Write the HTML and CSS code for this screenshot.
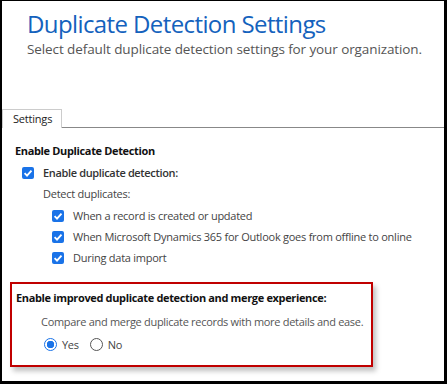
FILE: index.html
```html
<!DOCTYPE html>
<html lang="en">
  <head>
    <meta charset="UTF-8" />
    <title>Duplicate Detection Settings</title>
    <link rel="stylesheet" href="styles.css">
  </head>
  <body>
    <div class="frame">
      <div class="header">
        <h1 class="title">Duplicate Detection Settings</h1>
        <p class="subtitle">Select default duplicate detection settings for your organization.</p>
      </div>

      <div class="tabs">
        <div class="tab">Settings</div>
        <div class="tabLine"></div>
      </div>

      <div class="content">
        <h3 class="sectionTitle">Enable Duplicate Detection</h3>
        <div class="checkRow main">
          <span class="check"><svg viewBox="0 0 12 12" width="12" height="12"><path d="M2.6 6.2 L5 8.6 L9.5 3.6" fill="none" stroke="#fff" stroke-width="1.9" /></svg></span>
          <span class="mainLabel">Enable duplicate detection:</span>
        </div>
        <div class="detectLabel">Detect duplicates:</div>
        <div class="subChecks">
          <div class="checkRow">
            <span class="check"><svg viewBox="0 0 12 12" width="12" height="12"><path d="M2.6 6.2 L5 8.6 L9.5 3.6" fill="none" stroke="#fff" stroke-width="1.9" /></svg></span>
            <span>When a record is created or updated</span>
          </div>
          <div class="checkRow">
            <span class="check"><svg viewBox="0 0 12 12" width="12" height="12"><path d="M2.6 6.2 L5 8.6 L9.5 3.6" fill="none" stroke="#fff" stroke-width="1.9" /></svg></span>
            <span>When Microsoft Dynamics 365 for Outlook goes from offline to online</span>
          </div>
          <div class="checkRow">
            <span class="check"><svg viewBox="0 0 12 12" width="12" height="12"><path d="M2.6 6.2 L5 8.6 L9.5 3.6" fill="none" stroke="#fff" stroke-width="1.9" /></svg></span>
            <span>During data import</span>
          </div>
        </div>
      </div>

      <div class="highlight">
        <h3 class="highlightTitle">Enable improved duplicate detection and merge experience:</h3>
        <p class="highlightText">Compare and merge duplicate records with more details and ease.</p>
        <div class="radios">
          <label class="radio"><span class="dot checked"></span>Yes</label>
          <label class="radio"><span class="dot"></span>No</label>
        </div>
      </div>
    </div>
  </body>
</html>
```

FILE: styles.css
```css
body {
  margin: 0;
  font-family: "Segoe UI", "Open Sans", sans-serif;
  color: #444;
}
.frame {
  width: 447px;
  height: 384px;
  box-sizing: border-box;
  border-style: solid;
  border-color: #000;
  border-width: 1px 3px 3px 2px;
  background-color: #fff;
  overflow: hidden;
}

.header {
  padding: 7px 0 0 25px;
}
.title {
  margin: 0;
  font-size: 24px;
  font-weight: normal;
  line-height: 32px;
  color: #1462bd;
  letter-spacing: -0.6px;
}
.subtitle {
  margin: 0;
  font-size: 13.5px;
  line-height: 18px;
  color: #555;
  letter-spacing: -0.1px;
}

.tabs {
  display: flex;
  align-items: flex-end;
  margin-top: 51px;
}
.tab {
  padding: 1px 9px 2px 10px;
  border: 1px solid #ccc;
  border-bottom: none;
  font-size: 11px;
  line-height: 15px;
  color: #222;
  letter-spacing: -0.2px;
}
.tabLine {
  flex: 1;
  border-bottom: 1px solid #888;
}

.content {
  padding: 15px 0 0 13px;
  font-size: 11px;
  color: #444;
  letter-spacing: -0.25px;
}
.sectionTitle {
  margin: 0 0 4px;
  font-size: 11px;
  font-weight: bold;
  line-height: 15px;
  color: #111;
  letter-spacing: -0.35px;
}
.checkRow {
  display: flex;
  align-items: center;
  gap: 9px;
  height: 21px;
}
.checkRow.main {
  padding-left: 7px;
}
.check {
  width: 12px;
  height: 12px;
  border-radius: 2px;
  background-color: #1a73e8;
  display: flex;
}
.mainLabel {
  font-weight: 600;
  color: #333;
  letter-spacing: -0.35px;
}
.detectLabel {
  padding: 3px 0 4px 28px;
}
.subChecks {
  padding-left: 37px;
}

.highlight {
  margin: 14px 0 0 8px;
  width: 363px;
  height: 85px;
  box-sizing: border-box;
  border: 2px solid #c00000;
  box-shadow: 3px 4px 5px rgba(0, 0, 0, 0.25);
  padding: 6px 0 0 4px;
  font-size: 11px;
  letter-spacing: -0.3px;
}
.highlightTitle {
  margin: 0;
  font-size: 11px;
  font-weight: bold;
  line-height: 15px;
  color: #111;
  letter-spacing: -0.35px;
}
.highlightText {
  margin: 9px 0 0 25px;
  line-height: 15px;
  color: #555;
  white-space: nowrap;
}
.radios {
  display: flex;
  gap: 11px;
  margin: 8px 0 0 28px;
}
.radio {
  display: flex;
  align-items: center;
  gap: 5px;
  color: #444;
}
.dot {
  width: 11px;
  height: 11px;
  border: 1px solid #555;
  border-radius: 50%;
  box-sizing: content-box;
}
.dot.checked {
  border-color: #1a73e8;
  background: radial-gradient(circle, #1a73e8 0 3.5px, #fff 4px);
}
```
